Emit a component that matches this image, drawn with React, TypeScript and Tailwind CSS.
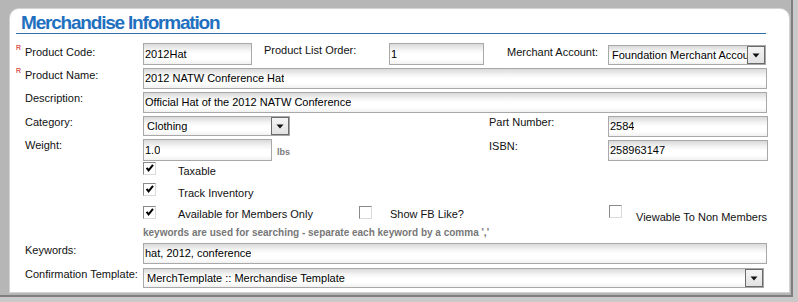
import React from "react";

const inputBg =
  "bg-[linear-gradient(180deg,#d9d9d9_0%,#f4f4f4_30%,#ffffff_50%,#ffffff_75%,#f1f1f1_100%)]";

function Req() {
  return (
    <span className="w-[9px] shrink-0 text-[7px] leading-[7px] text-[#d00000] -mt-[2px]">R</span>
  );
}

function Label({ req, text, className = "" }: { req?: boolean; text: string; className?: string }) {
  return (
    <div className={`flex w-[127px] shrink-0 items-start ${className}`}>
      {req ? <Req /> : <span className="w-[9px] shrink-0" />}
      <span className="text-[11px] leading-[13px] text-[#111]">{text}</span>
    </div>
  );
}

function TextBox({ value, className }: { value: string; className: string }) {
  return (
    <div
      className={`flex shrink-0 items-center border border-[#a8a8a8] ${inputBg} pl-[1px] text-[11px] leading-[13px] text-black ${className}`}
    >
      <span className="whitespace-nowrap overflow-hidden">{value}</span>
    </div>
  );
}

function Arrow() {
  return (
    <div className="flex w-[18px] h-full shrink-0 items-center justify-center border border-[#6b6b6b] bg-[linear-gradient(180deg,#f4f4f4_0%,#e2e2e2_100%)]">
      <svg width="8" height="5" viewBox="0 0 8 5">
        <polygon points="0.5,0.5 7.5,0.5 4,4.5" fill="#111" />
      </svg>
    </div>
  );
}

function Select({ value, className }: { value: string; className: string }) {
  return (
    <div className={`flex shrink-0 items-center border border-[#a8a8a8] ${inputBg} ${className}`}>
      <span className="flex-1 overflow-hidden whitespace-nowrap pl-[3px] text-[11px] leading-[13px] text-black">
        {value}
      </span>
      <Arrow />
    </div>
  );
}

function Check({ checked, className = "" }: { checked?: boolean; className?: string }) {
  return (
    <div
      className={`flex h-[13px] w-[13px] shrink-0 items-start justify-start border border-[#8a8a8a] border-r-[#dadada] border-b-[#dadada] bg-white ${className}`}
    >
      {checked && (
        <svg width="11" height="11" viewBox="0 0 11 11" className="shrink-0">
          <path d="M2.6 4.8 L4.6 7.4 L9 1.8" stroke="#000" strokeWidth="2" fill="none" />
        </svg>
      )}
    </div>
  );
}

export default function App() {
  return (
    <div className="h-[302px] w-[798px] overflow-hidden bg-[#c9c9c9] font-['Liberation_Sans',Arial,sans-serif]">
      <div className="h-[297px] w-[793px] border-b-2 border-r-2 border-[#7e7e7e] bg-[#b6b6b6] pl-[9px] pt-[8px]">
        <div className="h-[285px] w-[781px] rounded-tl-[10px] rounded-tr-[10px] border border-[#d3d3d3] bg-white pl-[6px]">
          {/* Title */}
          <div className="mt-[2px] h-[23px] w-[750px] border-b border-[#2f6ea6] pl-[5px] pt-[1px] text-[19px] font-bold leading-[21px] tracking-[-1.2px] text-[#1f70c0]">
            Merchandise Information
          </div>

          {/* Row 1 */}
          <div className="mt-[9px] flex h-[22px] items-start">
            <Label req text="Product Code:" className="pt-[3px]" />
            <TextBox value="2012Hat" className="h-[22px] w-[109px]" />
            <div className="ml-[12px] w-[125px] shrink-0 pt-[1px] text-[11px] leading-[13px] text-[#111]">
              Product List Order:
            </div>
            <TextBox value="1" className="h-[22px] w-[95px]" />
            <div className="ml-[23px] w-[101px] shrink-0 pt-[3px] text-[11px] leading-[13px] text-[#111]">
              Merchant Account:
            </div>
            <Select value="Foundation Merchant Account" className="mt-[2px] h-[20px] w-[158px]" />
          </div>

          {/* Row 2 */}
          <div className="mt-[3px] flex h-[21px] items-start">
            <Label req text="Product Name:" className="pt-[1px]" />
            <TextBox value="2012 NATW Conference Hat" className="h-[21px] w-[624px]" />
          </div>

          {/* Row 3 */}
          <div className="mt-[3px] flex h-[21px] items-start">
            <Label text="Description:" />
            <TextBox value="Official Hat of the 2012 NATW Conference" className="h-[21px] w-[624px]" />
          </div>

          {/* Row 4 */}
          <div className="mt-[3px] flex h-[21px] items-start">
            <Label text="Category:" />
            <div className="flex w-[346px] shrink-0">
              <Select value="Clothing" className="h-[20px] w-[147px]" />
            </div>
            <div className="w-[119px] shrink-0 text-[11px] leading-[13px] text-[#111]">Part Number:</div>
            <TextBox value="2584" className="h-[21px] w-[160px]" />
          </div>

          {/* Row 5 */}
          <div className="mt-[2px] flex h-[22px] items-start">
            <Label text="Weight:" />
            <div className="flex w-[346px] shrink-0 items-center">
              <TextBox value="1.0" className="h-[22px] w-[129px]" />
              <span className="ml-[5px] mt-[4px] text-[9px] font-bold leading-[11px] text-[#7b7b7b]">lbs</span>
            </div>
            <div className="w-[119px] shrink-0 pt-[1px] text-[11px] leading-[13px] text-[#111]">ISBN:</div>
            <TextBox value="258963147" className="mt-[1px] h-[21px] w-[160px]" />
          </div>

          {/* Row 6 */}
          <div className="mt-[1px] flex h-[21px] items-start pl-[127px]">
            <Check checked />
            <span className="ml-[22px] mt-[3px] text-[11px] leading-[13px] text-[#111]">Taxable</span>
          </div>

          {/* Row 7 */}
          <div className="flex h-[23px] items-start pl-[127px]">
            <Check checked />
            <span className="ml-[22px] mt-[4px] text-[11px] leading-[13px] text-[#111]">Track Inventory</span>
          </div>

          {/* Row 8 */}
          <div className="flex h-[21px] items-start pl-[127px]">
            <Check checked />
            <span className="ml-[22px] mt-[2px] w-[181px] shrink-0 text-[11px] leading-[13px] text-[#111]">
              Available for Members Only
            </span>
            <Check />
            <span className="ml-[18px] mt-[2px] w-[219px] shrink-0 text-[11px] leading-[13px] text-[#111]">
              Show FB Like?
            </span>
            <Check className="-mt-[1px]" />
            <span className="ml-[14px] mt-[5px] text-[11px] leading-[13px] text-[#111]">Viewable To Non Members</span>
          </div>

          {/* Help text */}
          <div className="flex h-[13px] items-start pl-[127px]">
            <span className="text-[10px] font-bold leading-[12px] text-[#777]">
              keywords are used for searching - separate each keyword by a comma ','
            </span>
          </div>

          {/* Keywords */}
          <div className="mt-[3px] flex h-[21px] items-start">
            <Label text="Keywords:" className="pt-[1px]" />
            <TextBox value="hat, 2012, conference" className="h-[21px] w-[624px]" />
          </div>

          {/* Confirmation */}
          <div className="mt-[4px] flex h-[20px] items-start">
            <Label text="Confirmation Template:" />
            <Select value="MerchTemplate :: Merchandise Template" className="h-[20px] w-[621px]" />
          </div>
        </div>
      </div>
    </div>
  );
}
